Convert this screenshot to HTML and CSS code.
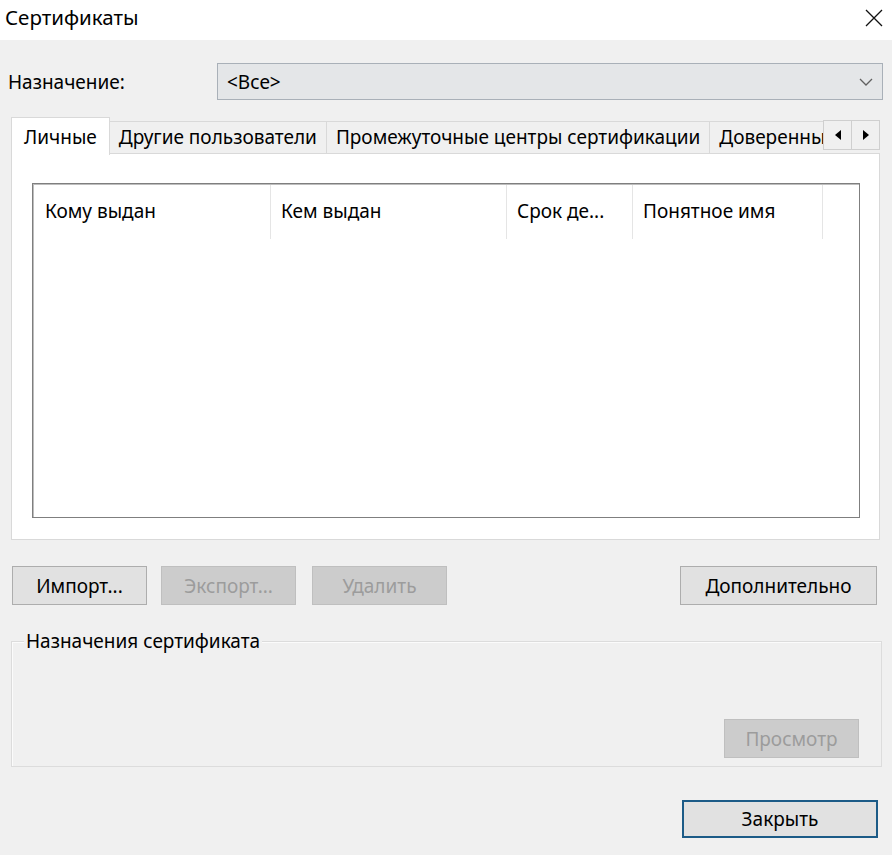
FILE: index.html
```html
<!DOCTYPE html>
<html lang="ru">
<head>
<meta charset="utf-8">
<title>Сертификаты</title>
<link rel="stylesheet" href="styles.css">
</head>
<body>
<div class="titlebar">
  <span class="title">Сертификаты</span>
  <svg class="close" width="18" height="18" viewBox="0 0 18 18"><path d="M1 1 L17 17 M17 1 L1 17" stroke="#111" stroke-width="1.3" fill="none"/></svg>
</div>
<div class="purpose">
  <span class="purpose-label">Назначение:</span>
  <div class="combo">
    <span>&lt;Все&gt;</span>
    <svg class="chev" width="14" height="8" viewBox="0 0 14 8"><path d="M1 1 L7 7 L13 1" stroke="#606060" stroke-width="1.3" fill="none"/></svg>
  </div>
</div>
<div class="tabs">
  <div class="tabstrip">
    <div class="tabview">
      <div class="tab active">Личные</div>
      <div class="tab">Другие пользователи</div>
      <div class="tab">Промежуточные центры сертификации</div>
      <div class="tab last">Доверенные корневые</div>
    </div>
    <div class="scroller">
      <div class="sbtn"><svg width="6" height="10" viewBox="0 0 6 10"><path d="M6 0 L0 5 L6 10 Z" fill="#000"/></svg></div>
      <div class="sbtn"><svg width="6" height="10" viewBox="0 0 6 10"><path d="M0 0 L6 5 L0 10 Z" fill="#000"/></svg></div>
    </div>
  </div>
  <div class="panel">
    <div class="list">
      <div class="header">
        <div class="col c1">Кому выдан</div>
        <div class="col c2">Кем выдан</div>
        <div class="col c3">Срок де...</div>
        <div class="col c4">Понятное имя</div>
      </div>
    </div>
  </div>
</div>
<div class="actions">
  <button class="btn w135">Импорт...</button>
  <button class="btn w135 disabled gap14">Экспорт...</button>
  <button class="btn w135 disabled gap16">Удалить</button>
  <button class="btn more">Дополнительно</button>
</div>
<div class="group">
  <span class="group-title">Назначения сертификата</span>
  <div class="group-actions">
    <button class="btn w135 disabled">Просмотр</button>
  </div>
</div>
<div class="footer">
  <button class="btn close-btn">Закрыть</button>
</div>
</body>
</html>
```
FILE: styles.css
```css
* { box-sizing: border-box; }
html, body { margin: 0; padding: 0; }
body {
  width: 892px;
  height: 855px;
  overflow: hidden;
  background: #f0f0f0;
  font-family: "Noto Sans", "Open Sans", sans-serif;
  font-size: 19px;
  color: #000;
}
.titlebar {
  height: 40px;
  background: #fff;
  display: flex;
  align-items: center;
  justify-content: space-between;
  padding: 0 9px 6px 5px;
}
.title { font-size: 20.5px; }
.close { margin-top: 2px; }

.purpose {
  display: flex;
  align-items: center;
  margin-top: 23px;
  padding-left: 8px;
}
.purpose-label { width: 209px; }
.combo {
  width: 666px;
  height: 37px;
  background: #e4e6e8;
  border: 1px solid #a9b0b8;
  display: flex;
  align-items: center;
  justify-content: space-between;
  padding: 0 9px 0 9px;
}

.tabs { margin: 17px 12px 0 11px; }
.tabstrip {
  display: flex;
  align-items: flex-start;
  height: 36px;
}
.tabview {
  width: 812px;
  height: 38px;
  display: flex;
  align-items: flex-end;
  overflow: hidden;
  position: relative;
  z-index: 1;
  flex: none;
}
.tab {
  flex: none;
  height: 32px;
  margin-bottom: 2px;
  background: #f0f0f0;
  border: 1px solid #d9d9d9;
  border-bottom: none;
  margin-left: -1px;
  padding: 0 9px 0 9px;
  line-height: 30px;
  white-space: nowrap;
}
.tab.last { width: 120px; overflow: hidden; padding-right: 0; }
.tab.active {
  height: 38px;
  margin-bottom: 0;
  margin-left: 0;
  background: #fff;
  padding: 0 12px 0 12px;
  line-height: 38px;
}
.scroller {
  display: flex;
  margin-top: 3px;
  height: 30px;
}
.sbtn {
  width: 29px;
  height: 30px;
  background: #f0f0f0;
  border: 1px solid #cfcfcf;
  display: flex;
  align-items: center;
  justify-content: center;
}
.sbtn + .sbtn { margin-left: -1px; }

.panel {
  height: 387px;
  background: #fff;
  border: 1px solid #d9d9d9;
  padding: 29px 0 0 20px;
}
.list {
  width: 828px;
  height: 335px;
  border: 1px solid #7f7f7f;
  box-shadow: inset 1px 1px 0 #bdbdbd;
  background: #fff;
  padding: 1px 0 0 1px;
}
.header {
  display: flex;
  height: 54px;
}
.col {
  height: 54px;
  border-right: 1px solid #e5e5e5;
  padding-left: 11px;
  line-height: 52px;
  white-space: nowrap;
  overflow: hidden;
}
.c1 { width: 237px; }
.c2 { width: 236px; padding-left: 10px; }
.c3 { width: 126px; padding-left: 10px; }
.c4 { width: 190px; padding-left: 10px; }

.actions {
  display: flex;
  margin-top: 26px;
  padding: 0 15px 0 12px;
}
.btn {
  font: inherit;
  font-size: 19px;
  height: 39px;
  background: #e1e1e1;
  border: 1px solid #adadad;
  color: #000;
  padding: 0;
}
.w135 { width: 135px; }
.gap14 { margin-left: 14px; }
.gap16 { margin-left: 16px; }
.btn.disabled {
  background: #cccccc;
  border-color: #bfbfbf;
  color: #9c9c9c;
}
.more { width: 197px; margin-left: auto; }

.group {
  margin: 36px 10px 0 11px;
  height: 126px;
  border: 1px solid #dcdcdc;
  box-shadow: inset 1px 1px 0 #fbfbfb;
}
.group-title {
  display: inline-block;
  margin: -13px 0 0 12px;
  padding: 0 2px;
  background: #f0f0f0;
  line-height: 24px;
  vertical-align: top;
}
.group-actions {
  display: flex;
  justify-content: flex-end;
  padding-right: 22px;
  margin-top: 51px;
}

.footer {
  display: flex;
  justify-content: flex-end;
  margin-top: 33px;
  padding-right: 14px;
}
.close-btn {
  width: 196px;
  height: 38px;
  border: 2px solid #1c5b87;
}
```
